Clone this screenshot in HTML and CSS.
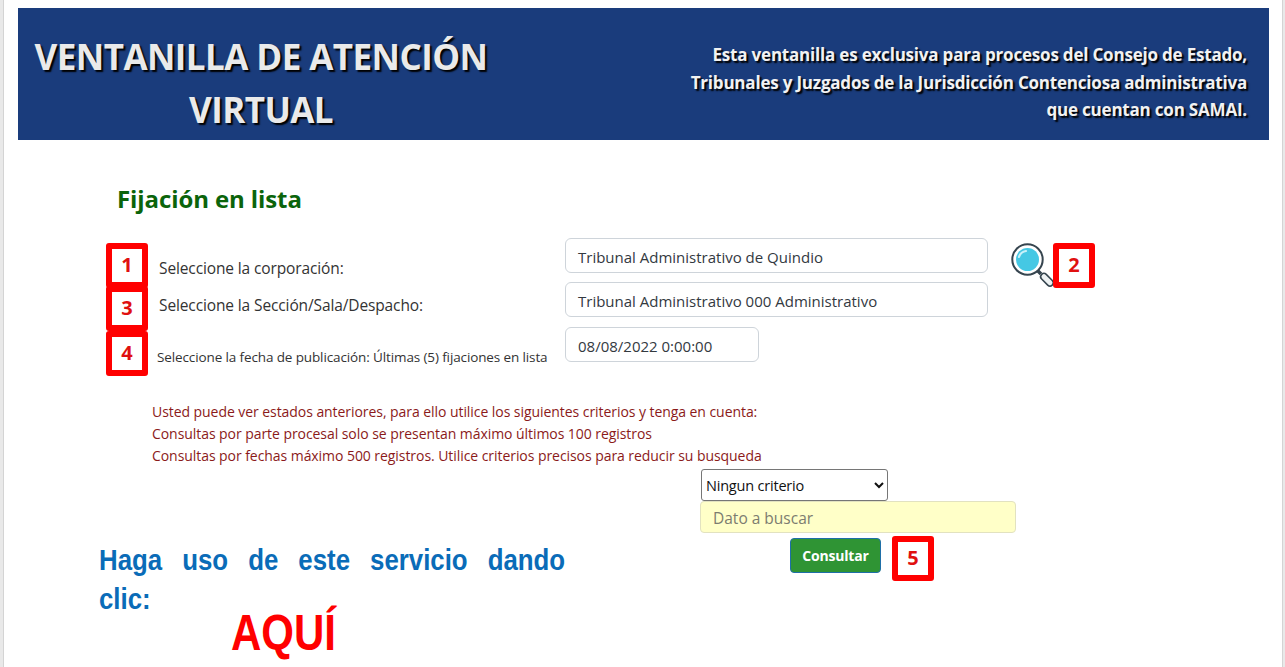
FILE: index.html
```html
<!DOCTYPE html>
<html lang="es">
<head>
<meta charset="utf-8">
<title>Ventanilla de Atención Virtual</title>
<link rel="stylesheet" href="styles.css">
</head>
<body>
<div class="page">
  <header class="banner">
    <h1 class="banner-title">VENTANILLA DE ATENCIÓN VIRTUAL</h1>
    <p class="banner-note">Esta ventanilla es exclusiva para procesos del Consejo de Estado,<br>Tribunales y Juzgados de la Jurisdicción Contenciosa administrativa<br>que cuentan con SAMAI.</p>
  </header>
  <main class="content">
    <h2 class="section-title">Fijación en lista</h2>
    <div class="form">
      <div class="row row-1">
        <label class="label">Seleccione la corporación:</label>
        <div class="field field-wide">Tribunal Administrativo de Quindio</div>
        <svg class="lens" viewBox="0 0 46 46" width="46" height="46" aria-hidden="true">
          <path d="M27.500 27.500l3.500 3.500" stroke="#36454f" stroke-width="3.500"/>
          <rect x="29.500" y="33.500" width="15" height="6.500" rx="3.200" transform="rotate(45 37 36.700)" fill="#eef2f3" stroke="#36454f" stroke-width="1.600"/>
          <circle cx="17.500" cy="16.500" r="15.200" fill="#fff" stroke="#36454f" stroke-width="2"/>
          <circle cx="17.500" cy="16.500" r="11.500" fill="#45c8e4"/>
          <path d="M9 14c1-3.500 3.500-5.500 7-6" fill="none" stroke="#c9f1f9" stroke-width="2.200" stroke-linecap="round"/>
        </svg>
      </div>
      <div class="row row-2">
        <label class="label">Seleccione la Sección/Sala/Despacho:</label>
        <div class="field field-wide">Tribunal Administrativo 000 Administrativo</div>
      </div>
      <div class="row row-3">
        <label class="label label-small">Seleccione la fecha de publicación: Últimas (5) fijaciones en lista</label>
        <div class="field field-date">08/08/2022 0:00:00</div>
      </div>
      <span class="mark mark-1">1</span>
      <span class="mark mark-2">2</span>
      <span class="mark mark-3">3</span>
      <span class="mark mark-4">4</span>
    </div>
    <div class="notes">
      <p>Usted puede ver estados anteriores, para ello utilice los siguientes criterios y tenga en cuenta:</p>
      <p>Consultas por parte procesal solo se presentan máximo últimos 100 registros</p>
      <p>Consultas por fechas máximo 500 registros. Utilice criterios precisos para reducir su busqueda</p>
    </div>
    <div class="lower">
      <div class="promo">
        <p class="promo-text"><span class="promo-line">Haga uso de este servicio dando</span> clic:</p>
        <p class="promo-link">AQUÍ</p>
      </div>
      <div class="search">
        <select class="criteria"><option>Ningun criterio</option></select>
        <input class="query" type="text" placeholder="Dato a buscar">
        <div class="actions">
          <button class="submit" type="button">Consultar</button>
          <span class="mark mark-5">5</span>
        </div>
      </div>
    </div>
  </main>
</div>
</body>
</html>
```
FILE: styles.css
```css
* { box-sizing: border-box; }
html, body { margin: 0; height: 667px; overflow: hidden; background: #e9e9e9; }
body { font-family: "Open Sans", "Noto Sans", sans-serif; color: #212529; }
.page {
  width: 1280px;
  height: 667px;
  margin-left: 3px;
  padding: 8px 13px 0 14px;
  background: #fff;
  border-left: 1px solid #d4d4d4;
  border-right: 1px solid #d4d4d4;
  overflow: hidden;
}
.banner {
  height: 132px;
  background: #1a3c7c;
  display: flex;
  justify-content: space-between;
  padding: 0 22px 0 0;
}
.banner-title {
  width: 486px;
  margin: 22px 0 0;
  font-size: 35px;
  line-height: 53px;
  font-weight: 700;
  letter-spacing: -0.57px;
  text-align: center;
  color: #eaeaea;
  text-shadow: 2px 2px 1.500px #000;
}
.banner-note {
  margin: 33px 0 0;
  font-size: 17px;
  line-height: 27.500px;
  font-weight: 700;
  letter-spacing: -0.2px;
  text-align: right;
  color: #f2f2f2;
  text-shadow: 2px 2px 1.500px #000;
}
.content { padding-left: 99px; }
.section-title {
  margin: 44px 0 0;
  font-size: 24px;
  line-height: 30px;
  font-weight: 700;
  letter-spacing: -0.1px;
  color: #0b640b;
}
.form { position: relative; margin-top: 24px; margin-left: -99px; }
.row { position: relative; display: flex; align-items: flex-start; padding-left: 141px; }
.row-1 { height: 44px; }
.row-2 { height: 45px; }
.row-3 { height: 35px; }
.label { width: 406px; font-size: 15.500px; letter-spacing: -0.12px; line-height: 20px; color: #333; }
.row-1 .label { padding-top: 20px; }
.row-2 .label { padding-top: 13px; }
.label-small { font-size: 13.500px; padding-top: 20px; margin-left: -2px; width: 408px; letter-spacing: -0.12px; }
.field {
  height: 35px;
  padding: 0 12px;
  border: 1px solid #ced4da;
  border-radius: 6px;
  font-size: 15px;
  line-height: 37px;
  color: #33393f;
  background: #fff;
}
.field-wide { width: 423px; }
.field-date { width: 194px; }
.lens { margin: 5px 0 0 22px; }
.mark {
  display: flex;
  align-items: center;
  justify-content: center;
  width: 42px;
  height: 45px;
  padding-bottom: 2px;
  border: 6px solid #f00;
  border-radius: 3px;
  background: #fff;
  font-size: 20px;
  font-weight: 700;
  color: #e01010;
}
.form .mark { position: absolute; }
.mark-1 { left: 88px; top: 5px; }
.mark-2 { left: 1035px; top: 5px; }
.mark-3 { left: 88px; top: 48px; }
.mark-4 { left: 88px; top: 93px; }
.notes {
  margin: 39px 0 0 35px;
  font-size: 14px;
  letter-spacing: -0.06px;
  line-height: 22px;
  color: #8b1a1a;
}
.notes p { margin: 0; }
.lower { display: flex; align-items: flex-start; }
.promo { width: 466px; margin: 73px 0 0 -18px; font-family: "Liberation Sans", Arial, sans-serif; font-weight: 700; }
.promo-text {
  width: 542px;
  margin: 0;
  font-size: 30px;
  line-height: 39px;
  color: #0a6cb8;
  transform: scaleX(0.86);
  transform-origin: left center;
}
.promo-line { display: block; text-align: justify; text-align-last: justify; }
.promo-link {
  margin: -10px 0 0 132px;
  font-size: 50px;
  line-height: 50px;
  color: #f00;
  transform: scaleX(0.84);
  transform-origin: left center;
}
.search { display: flex; flex-direction: column; width: 316px; margin: 2px 0 0 135px; }
.criteria {
  width: 187px;
  height: 32px;
  margin-left: 1px;
  padding: 0;
  border: 1px solid #767676;
  border-radius: 3px;
  background: #fff;
  font-family: inherit;
  font-size: 14.500px;
  letter-spacing: -0.2px;
  color: #111;
}
.query {
  width: 316px;
  height: 32px;
  padding: 1px 12px 0;
  border: 1px solid #e2e2c0;
  border-radius: 4px;
  background: #ffffc8;
  font-family: inherit;
  font-size: 15.500px;
  color: #777;
}
.query::placeholder { color: #7c7c70; opacity: 1; }
.actions { display: flex; align-items: flex-start; margin: 3px 0 0 90px; gap: 11px; }
.submit {
  width: 91px;
  height: 35px;
  margin-top: 2px;
  padding: 0;
  border: 1px solid #1f6fa8;
  border-radius: 4px;
  background: #2f9434;
  font-family: inherit;
  font-size: 14px;
  font-weight: 700;
  letter-spacing: -0.2px;
  color: #fff;
}
```
